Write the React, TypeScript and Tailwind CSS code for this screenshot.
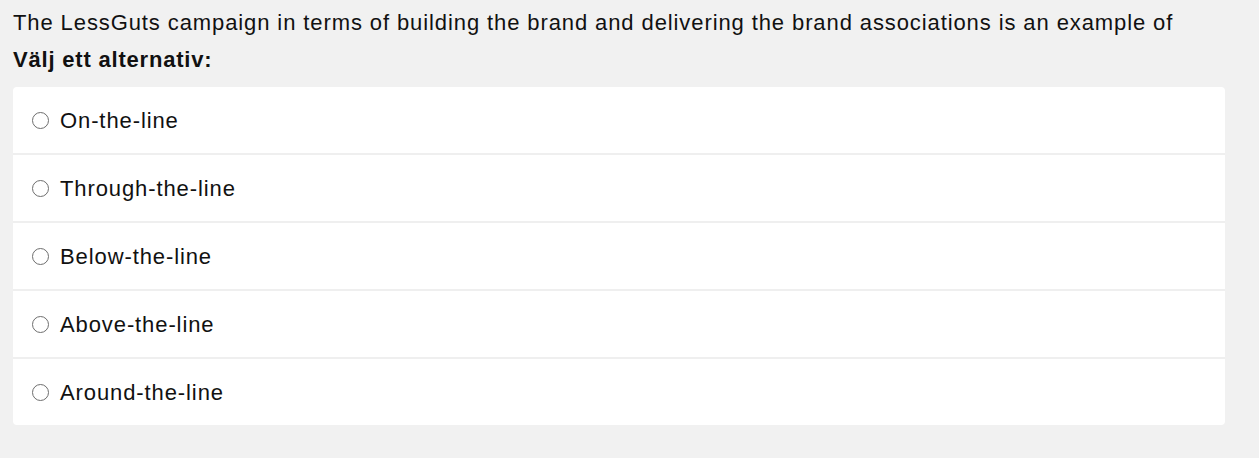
const options = ['On-the-line', 'Through-the-line', 'Below-the-line', 'Above-the-line', 'Around-the-line'];

export default function App() {
  return (
    <div className="min-h-[458px] w-[1259px] bg-[#f1f1f1] text-[#111] font-['Liberation_Sans',Arial,sans-serif]">
      <div className="pl-[13px] pt-[9px]">
        <div className="text-[22px] leading-[27px] tracking-[0.9px]">
          The LessGuts campaign in terms of building the brand and delivering the brand associations is an example of
        </div>
        <div className="text-[22px] leading-[27px] tracking-[0.8px] font-bold mt-[10px]">Välj ett alternativ:</div>
        <div className="mt-[14px] w-[1212px] bg-white rounded-[4px] flex flex-col">
          {options.map((opt, i) => (
            <label
              key={opt}
              className={`flex items-center pl-[19px] cursor-pointer ${
                i < options.length - 1 ? 'h-[68px] border-b-2 border-[#efefef]' : 'h-[66px]'
              }`}
            >
              <span className="w-[17px] h-[17px] rounded-full border border-[#6e6e6e] bg-white shrink-0" />
              <span className="ml-[11px] text-[22px] tracking-[0.9px]">{opt}</span>
            </label>
          ))}
        </div>
      </div>
    </div>
  );
}
